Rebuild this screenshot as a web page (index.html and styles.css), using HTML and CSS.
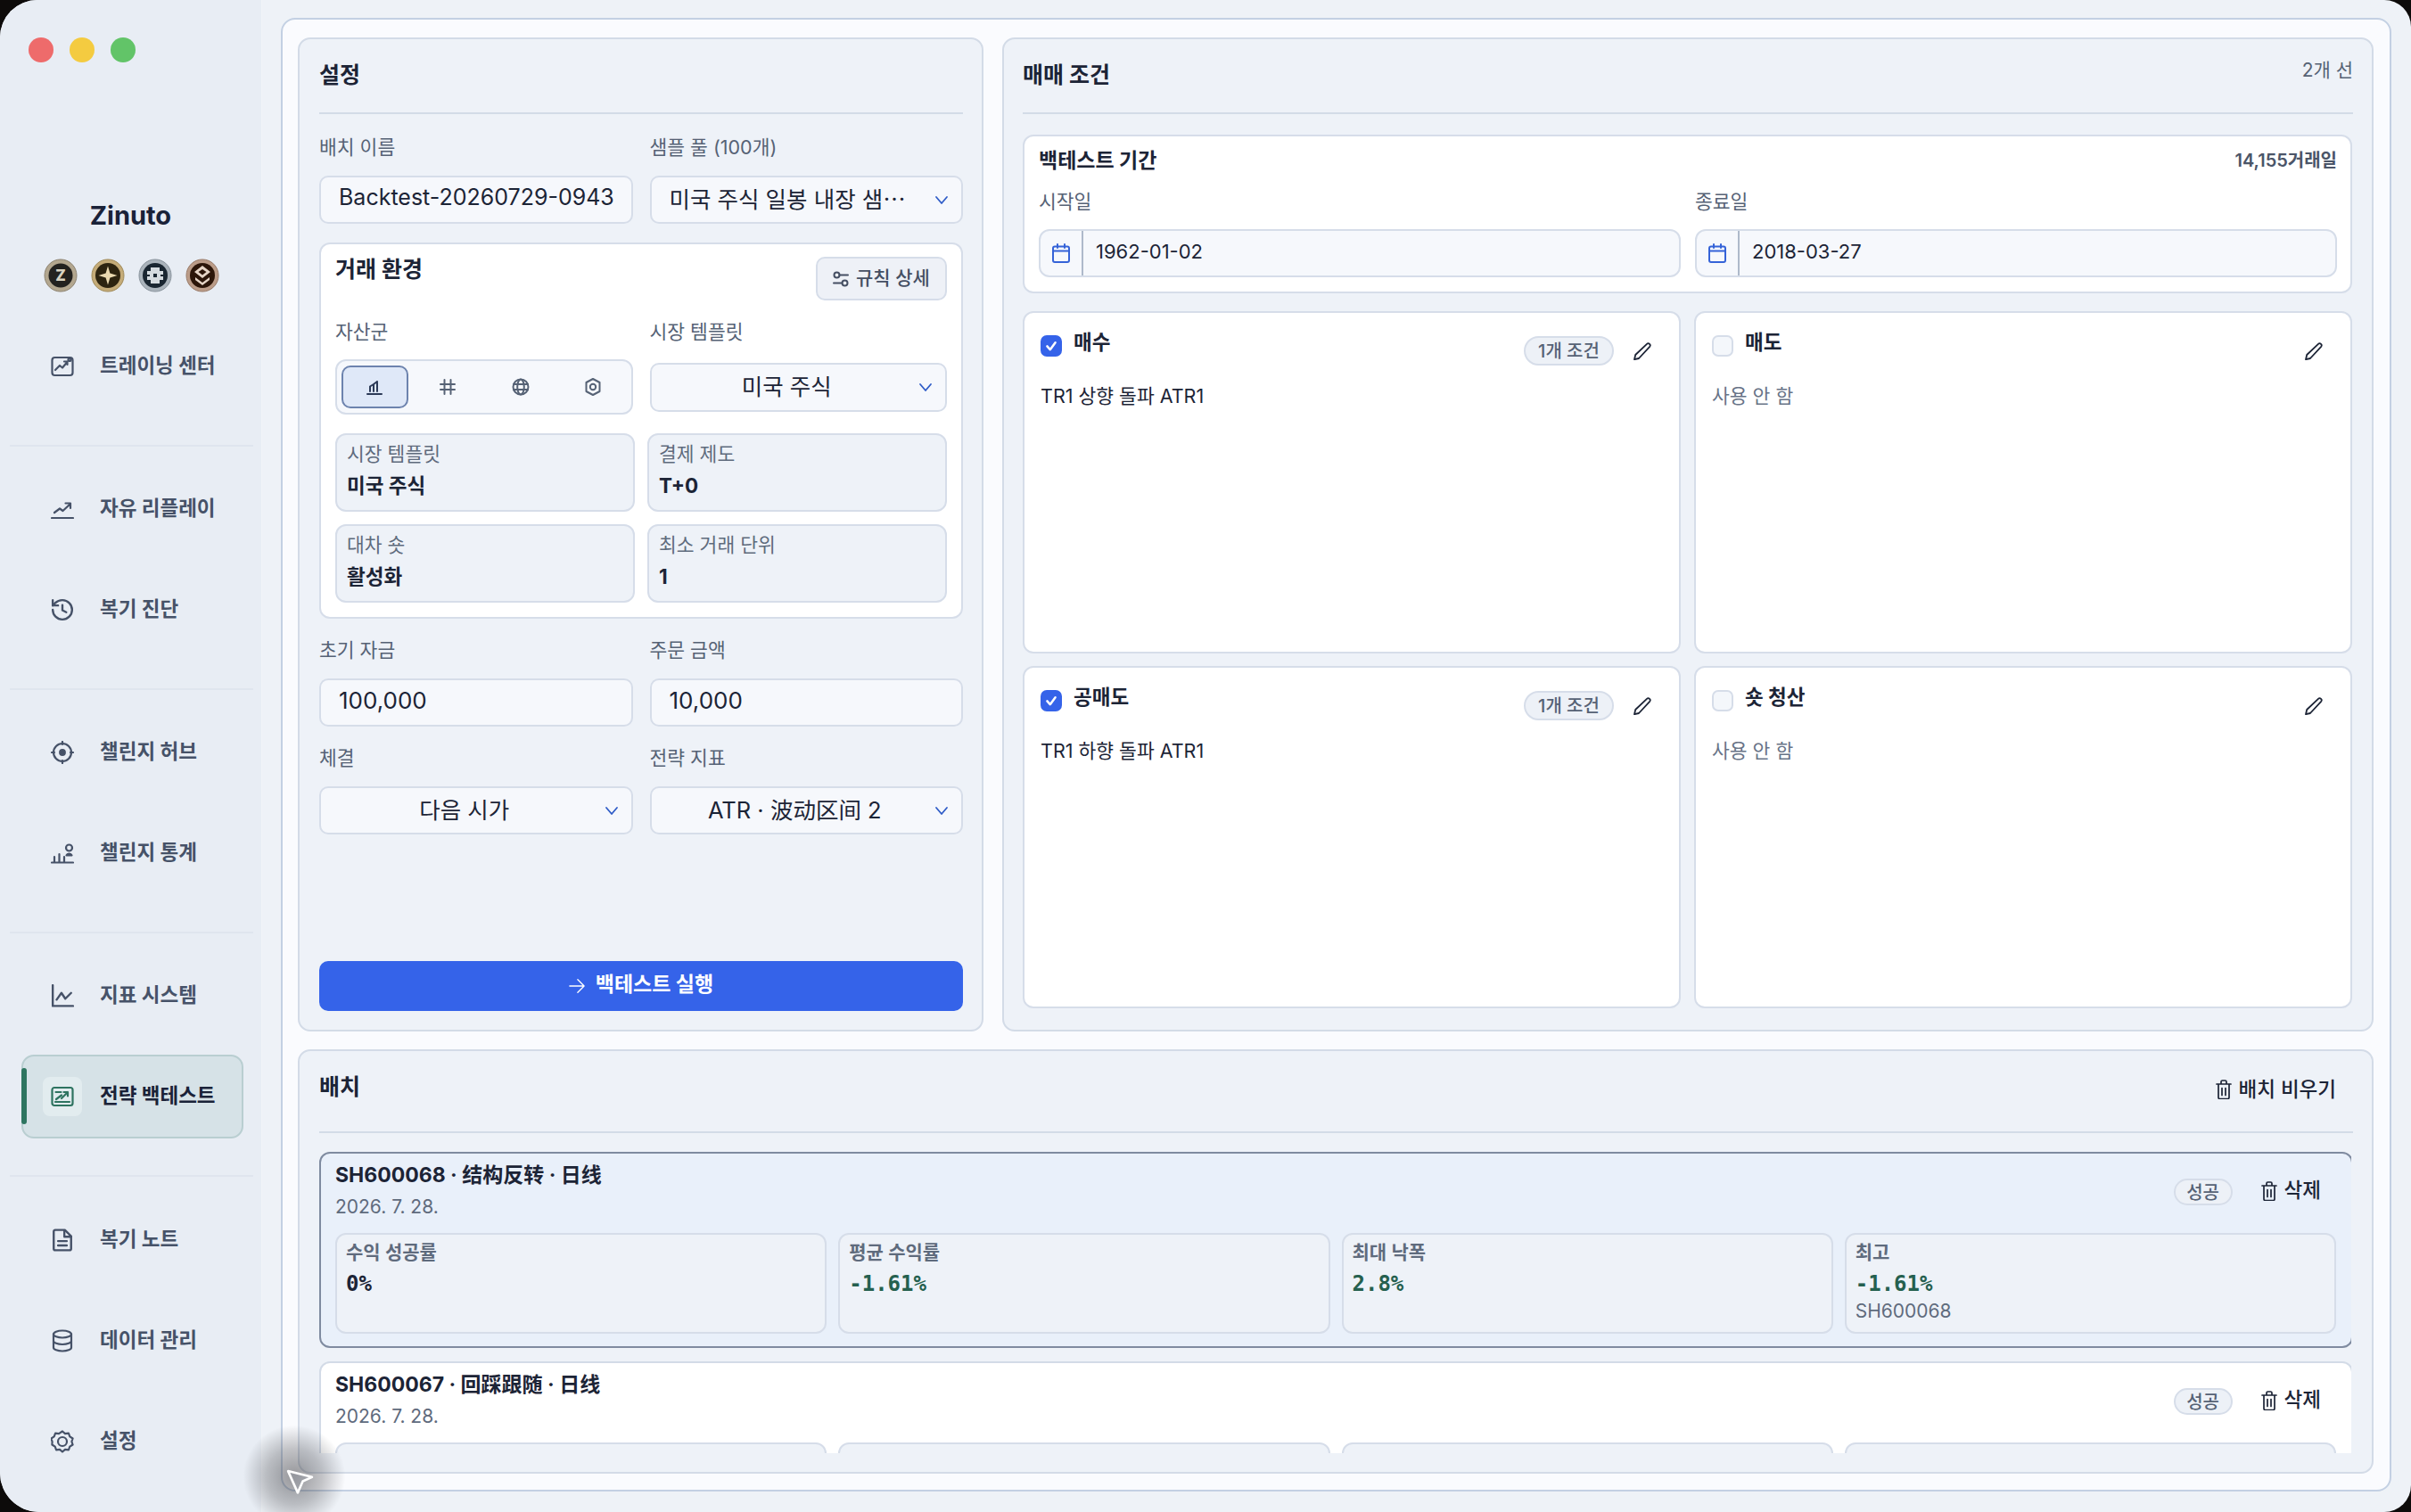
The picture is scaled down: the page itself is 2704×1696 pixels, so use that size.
FILE: index.html
```html
<!DOCTYPE html>
<html lang="ko">
<head>
    <meta charset="UTF-8">
    <title>Zinuto</title>
    <link rel="stylesheet" href="styles.css">
</head>
<body>
<div class="window">
    <aside class="sidebar">
        <div class="lights">
            <span class="light light-red"></span>
            <span class="light light-yellow"></span>
            <span class="light light-green"></span>
        </div>
        <div class="brand">Zinuto</div>
        <div class="badges">
            <svg class="badge" viewBox="0 0 38 38"><circle cx="19" cy="19" r="18" fill="#b3a78f" stroke="#8d8371"/><circle cx="19" cy="19" r="13.5" fill="#23221f"/><text x="19" y="25" text-anchor="middle" font-size="17" font-weight="800" fill="#d8d2c0" font-family="Inter">Z</text></svg>
            <svg class="badge" viewBox="0 0 38 38"><circle cx="19" cy="19" r="18" fill="#c4ab78" stroke="#a08a58"/><circle cx="19" cy="19" r="14" fill="#2d2410"/><path d="M19 8.5l2.4 8.1 8.1 2.4-8.1 2.4-2.4 8.1-2.4-8.1-8.1-2.4 8.1-2.4z" fill="#ead9b0"/></svg>
            <svg class="badge" viewBox="0 0 38 38"><circle cx="19" cy="19" r="18" fill="#aab3bb" stroke="#89939c"/><circle cx="19" cy="19" r="14" fill="#1a2631"/><path d="M14 10h10v4h4v4h-3v2h3v4h-4v4H14v-4h-4v-4h3v-2h-3v-4h4z" fill="#d5dbdf"/><rect x="17" y="17" width="4" height="4" fill="#1a2631"/></svg>
            <svg class="badge" viewBox="0 0 38 38"><circle cx="19" cy="19" r="18" fill="#bb9c88" stroke="#997c6a"/><circle cx="19" cy="19" r="14" fill="#2c1609"/><path d="M19 8l9 7-9 7-9-7zM19 12l-4.500 3 4.500 3.500 4.500-3.500z" fill="#e6d5c6" fill-rule="evenodd"/><path d="M11 21l8 6 8-6v3l-8 6-8-6z" fill="#e6d5c6"/></svg>
        </div>

        <div class="nav-group">
            <a class="nav-item">
                <span class="nav-icon"><svg class="icon" viewBox="0 0 26 24"><rect x="1.500" y="2" width="23" height="20" rx="3"/><path d="M5 16l5-5 3 2.500 5-6M15 6.500h3.500V10"/><circle cx="21" cy="4.500" r="1.500"/></svg></span>
                <span class="nav-label">트레이닝 센터</span>
            </a>
        </div>
        <div class="nav-group">
            <a class="nav-item">
                <span class="nav-icon"><svg class="icon" viewBox="0 0 26 24"><path d="M1 22h24M4 16l6-4.500 3.500 2.500L21 7M16.500 5.500H22V11"/></svg></span>
                <span class="nav-label">자유 리플레이</span>
            </a>
            <a class="nav-item gap">
                <span class="nav-icon"><svg class="icon" viewBox="0 0 24 24"><path d="M2 12a10 10 0 1 0 10-10 10.800 10.800 0 0 0-7.500 3L2 7.500"/><path d="M2 2v5.500h5.500M12 7v5.500l4 2"/></svg></span>
                <span class="nav-label">복기 진단</span>
            </a>
        </div>
        <div class="nav-group">
            <a class="nav-item">
                <span class="nav-icon"><svg class="icon" viewBox="0 0 26 26"><circle cx="13" cy="13" r="10"/><circle cx="13" cy="13" r="2.800" class="solid"/><path d="M13 1v3M13 22v3M1 13h3M22 13h3"/></svg></span>
                <span class="nav-label">챌린지 허브</span>
            </a>
            <a class="nav-item gap">
                <span class="nav-icon"><svg class="icon" viewBox="0 0 26 24"><path d="M1 22.500h24M4 22.500V16M9.500 22.500V13M15 22.500V16"/><circle cx="20.500" cy="6" r="3.500"/><path d="M17.500 14.500c1-2.500 5-2.500 6 0z"/></svg></span>
                <span class="nav-label">챌린지 통계</span>
            </a>
        </div>
        <div class="nav-group">
            <a class="nav-item">
                <span class="nav-icon"><svg class="icon" viewBox="0 0 24 24"><path d="M2 1v21.500h21M6 16l5-7 4 6 6-6"/></svg></span>
                <span class="nav-label">지표 시스템</span>
            </a>
            <a class="nav-item gap active">
                <span class="nav-bar"></span>
                <span class="nav-icon"><svg class="icon" viewBox="0 0 26 24"><rect x="1.500" y="2" width="23" height="20" rx="2.500"/><path d="M5 18h16M5.500 7h6M6 15l6-4.500M12 14l7-7M14.500 7H19v4.500"/></svg></span>
                <span class="nav-label">전략 백테스트</span>
            </a>
        </div>
        <div class="nav-group last">
            <a class="nav-item">
                <span class="nav-icon"><svg class="icon" viewBox="0 0 24 24"><path d="M14.500 1.500H4.500a1.500 1.500 0 0 0-1.500 1.500v18a1.500 1.500 0 0 0 1.500 1.500h15a1.500 1.500 0 0 0 1.500-1.500V8z"/><path d="M14 2v6.500h7M7.500 13h9M7.500 17.500h9"/></svg></span>
                <span class="nav-label">복기 노트</span>
            </a>
            <a class="nav-item gap">
                <span class="nav-icon"><svg class="icon" viewBox="0 0 24 26"><ellipse cx="12" cy="5.500" rx="10" ry="4"/><path d="M2 5.500v15c0 2.200 4.500 4 10 4s10-1.800 10-4v-15M2 13c0 2.200 4.500 4 10 4s10-1.800 10-4"/></svg></span>
                <span class="nav-label">데이터 관리</span>
            </a>
            <a class="nav-item gap">
                <span class="nav-icon"><svg class="icon" viewBox="0 0 26 26"><circle cx="13" cy="13" r="5"/><path d="M13 1.500l3 2.600 3.900-.5 1.400 3.700 3.300 2.200-1.200 3.500 1.200 3.500-3.300 2.200-1.400 3.700-3.900-.5-3 2.600-3-2.600-3.900.5-1.400-3.700-3.300-2.200L1.600 13 .4 9.500l3.300-2.200 1.400-3.700 3.900.5z"/></svg></span>
                <span class="nav-label">설정</span>
            </a>
        </div>
    </aside>

    <main class="main">
        <div class="frame">
            <div class="top-row">
                <section class="panel settings">
                    <header class="panel-head"><h2>설정</h2></header>
                    <div class="form-grid first">
                        <div class="field">
                            <label>배치 이름</label>
                            <div class="control"><span class="clip">Backtest-20260729-094325</span></div>
                        </div>
                        <div class="field">
                            <label>샘플 풀 (100개)</label>
                            <div class="control select"><span class="ellipsis">미국 주식 일봉 내장 샘플 풀</span>
                                <svg class="chevron" viewBox="0 0 16 16"><path d="M2 5l6 7 6-7"/></svg></div>
                        </div>
                    </div>

                    <div class="env-card">
                        <div class="env-head">
                            <h3>거래 환경</h3>
                            <button class="rule-btn">
                                <svg class="icon small" viewBox="0 0 18 18"><circle cx="4.500" cy="4.500" r="3"/><path d="M7.500 4.500H17M1 13.500h9.500"/><circle cx="13.500" cy="13.500" r="3"/></svg>
                                <span class="rule-text">규칙 상세</span>
                            </button>
                        </div>
                        <div class="form-grid env-fields">
                            <div class="field">
                                <label>자산군</label>
                                <div class="seg-wrap">
                                    <div class="segment">
                                        <span class="seg-btn on"><svg class="icon seg" viewBox="0 0 20 20"><path d="M2 18h16M5 15V9.500M9 15V7M13 15V4M9 7l-4 2.500M13 4L9 7"/></svg></span>
                                        <span class="seg-btn"><svg class="icon seg" viewBox="0 0 20 20"><path d="M6.500 2v16M13.500 2v16M2 7h16M2 13h16"/></svg></span>
                                        <span class="seg-btn"><svg class="icon seg" viewBox="0 0 20 20"><circle cx="10" cy="10" r="8.500"/><ellipse cx="10" cy="10" rx="3.800" ry="8.500"/><path d="M2 7h16M2 13h16"/></svg></span>
                                        <span class="seg-btn"><svg class="icon seg" viewBox="0 0 20 20"><path d="M10 1l7.500 4v10L10 19l-7.500-4V5z"/><circle cx="10" cy="10" r="3.200"/></svg></span>
                                    </div>
                                </div>
                            </div>
                            <div class="field">
                                <label>시장 템플릿</label>
                                <div class="seg-wrap">
                                    <div class="control select center env-select"><span class="grow">미국 주식</span>
                                        <svg class="chevron" viewBox="0 0 16 16"><path d="M2 5l6 7 6-7"/></svg></div>
                                </div>
                            </div>
                        </div>
                        <div class="info-grid">
                            <div class="info-card"><div class="info-label">시장 템플릿</div><div class="info-value">미국 주식</div></div>
                            <div class="info-card"><div class="info-label">결제 제도</div><div class="info-value">T+0</div></div>
                            <div class="info-card"><div class="info-label">대차 숏</div><div class="info-value">활성화</div></div>
                            <div class="info-card"><div class="info-label">최소 거래 단위</div><div class="info-value">1</div></div>
                        </div>
                    </div>

                    <div class="form-grid next">
                        <div class="field">
                            <label>초기 자금</label>
                            <div class="control big">100,000</div>
                        </div>
                        <div class="field">
                            <label>주문 금액</label>
                            <div class="control big">10,000</div>
                        </div>
                    </div>
                    <div class="form-grid next">
                        <div class="field">
                            <label>체결</label>
                            <div class="control select center"><span class="grow">다음 시가</span>
                                <svg class="chevron" viewBox="0 0 16 16"><path d="M2 5l6 7 6-7"/></svg></div>
                        </div>
                        <div class="field">
                            <label>전략 지표</label>
                            <div class="control select center"><span class="grow">ATR · 波动区间 2</span>
                                <svg class="chevron" viewBox="0 0 16 16"><path d="M2 5l6 7 6-7"/></svg></div>
                        </div>
                    </div>
                    <button class="run-btn">
                        <svg class="icon run" viewBox="0 0 20 20"><path d="M1 10h18M11 2l8 8-8 8"/></svg>
                        <span class="run-text">백테스트 실행</span>
                    </button>
                </section>

                <section class="panel rules">
                    <header class="panel-head">
                        <h2>매매 조건</h2>
                        <span class="head-note">2개 선</span>
                    </header>
                    <div class="period-card">
                        <div class="period-head">
                            <h3>백테스트 기간</h3>
                            <span class="period-count">14,155거래일</span>
                        </div>
                        <div class="date-grid">
                            <div class="field">
                                <label>시작일</label>
                                <div class="date-input">
                                    <span class="date-icon"><svg class="icon cal" viewBox="0 0 20 22"><rect x="1" y="3.500" width="18" height="17.500" rx="2"/><path d="M1 8.500h18M6 1v4M14 1v4"/></svg></span>
                                    <span class="date-text">1962-01-02</span>
                                </div>
                            </div>
                            <div class="field">
                                <label>종료일</label>
                                <div class="date-input">
                                    <span class="date-icon"><svg class="icon cal" viewBox="0 0 20 22"><rect x="1" y="3.500" width="18" height="17.500" rx="2"/><path d="M1 8.500h18M6 1v4M14 1v4"/></svg></span>
                                    <span class="date-text">2018-03-27</span>
                                </div>
                            </div>
                        </div>
                    </div>
                    <div class="cond-grid">
                        <div class="cond-card">
                            <div class="cond-head">
                                <span class="check on"><svg viewBox="0 0 24 24"><path d="M6.500 12.500l4 4.500 7-9.500"/></svg></span>
                                <span class="cond-title">매수</span>
                                <span class="pill cond-pill">1개 조건</span>
                                <svg class="icon pencil" viewBox="0 0 20 20"><path d="M15 1.800a2.200 2.200 0 0 1 3.200 3L6 18l-5 1.200L2.200 14z"/></svg>
                            </div>
                            <p class="cond-desc">TR1 상향 돌파 ATR1</p>
                        </div>
                        <div class="cond-card">
                            <div class="cond-head">
                                <span class="check"></span>
                                <span class="cond-title">매도</span>
                                <svg class="icon pencil" viewBox="0 0 20 20"><path d="M15 1.800a2.200 2.200 0 0 1 3.200 3L6 18l-5 1.200L2.200 14z"/></svg>
                            </div>
                            <p class="cond-desc off">사용 안 함</p>
                        </div>
                        <div class="cond-card">
                            <div class="cond-head">
                                <span class="check on"><svg viewBox="0 0 24 24"><path d="M6.500 12.500l4 4.500 7-9.500"/></svg></span>
                                <span class="cond-title">공매도</span>
                                <span class="pill cond-pill">1개 조건</span>
                                <svg class="icon pencil" viewBox="0 0 20 20"><path d="M15 1.800a2.200 2.200 0 0 1 3.200 3L6 18l-5 1.200L2.200 14z"/></svg>
                            </div>
                            <p class="cond-desc">TR1 하향 돌파 ATR1</p>
                        </div>
                        <div class="cond-card">
                            <div class="cond-head">
                                <span class="check"></span>
                                <span class="cond-title">숏 청산</span>
                                <svg class="icon pencil" viewBox="0 0 20 20"><path d="M15 1.800a2.200 2.200 0 0 1 3.200 3L6 18l-5 1.200L2.200 14z"/></svg>
                            </div>
                            <p class="cond-desc off">사용 안 함</p>
                        </div>
                    </div>
                </section>
            </div>

            <section class="panel batch">
                <header class="panel-head batch-head">
                    <h2>배치</h2>
                    <button class="text-btn clear">
                        <svg class="icon trash" viewBox="0 0 18 22"><path d="M1 5h16M6 5V2.500A1.500 1.500 0 0 1 7.500 1h3A1.500 1.500 0 0 1 12 2.500V5M3 5v15a1.500 1.500 0 0 0 1.500 1.500h9A1.500 1.500 0 0 0 15 20V5M7 9.500v8M11 9.500v8"/></svg>
                        배치 비우기
                    </button>
                </header>
                <div class="batch-list">
                    <article class="batch-card selected">
                        <div class="batch-top">
                            <div class="batch-info">
                                <div class="batch-title">SH600068 · 结构反转 · 日线</div>
                                <div class="batch-date">2026. 7. 28.</div>
                            </div>
                            <span class="pill status">성공</span>
                            <button class="text-btn del">
                                <svg class="icon trash" viewBox="0 0 18 22"><path d="M1 5h16M6 5V2.500A1.500 1.500 0 0 1 7.500 1h3A1.500 1.500 0 0 1 12 2.500V5M3 5v15a1.500 1.500 0 0 0 1.500 1.500h9A1.500 1.500 0 0 0 15 20V5M7 9.500v8M11 9.500v8"/></svg>
                                삭제
                            </button>
                        </div>
                        <div class="stat-grid">
                            <div class="stat"><div class="stat-label">수익 성공률</div><div class="stat-value">0%</div></div>
                            <div class="stat"><div class="stat-label">평균 수익률</div><div class="stat-value profit">-1.61%</div></div>
                            <div class="stat"><div class="stat-label">최대 낙폭</div><div class="stat-value profit">2.8%</div></div>
                            <div class="stat"><div class="stat-label">최고</div><div class="stat-value profit">-1.61%</div><div class="stat-sub">SH600068</div></div>
                        </div>
                    </article>
                    <article class="batch-card">
                        <div class="batch-top">
                            <div class="batch-info">
                                <div class="batch-title">SH600067 · 回踩跟随 · 日线</div>
                                <div class="batch-date">2026. 7. 28.</div>
                            </div>
                            <span class="pill status">성공</span>
                            <button class="text-btn del">
                                <svg class="icon trash" viewBox="0 0 18 22"><path d="M1 5h16M6 5V2.500A1.500 1.500 0 0 1 7.500 1h3A1.500 1.500 0 0 1 12 2.500V5M3 5v15a1.500 1.500 0 0 0 1.500 1.500h9A1.500 1.500 0 0 0 15 20V5M7 9.500v8M11 9.500v8"/></svg>
                                삭제
                            </button>
                        </div>
                        <div class="stat-grid">
                            <div class="stat"></div>
                            <div class="stat"></div>
                            <div class="stat"></div>
                            <div class="stat"></div>
                        </div>
                    </article>
                </div>
            </section>
        </div>
    </main>

    <div class="cursor-glow"></div>
    <svg class="cursor" viewBox="0 0 30 28"><path d="M2 2l26 6.500-10 4.500-5.500 12.500z"/></svg>
</div>
</body>
</html>
```

FILE: styles.css
```css
* {
    box-sizing: border-box;
}
html, body {
    margin: 0;
    background: #0d0b0a;
}
body {
    width: 2704px;
    height: 1696px;
    overflow: hidden;
    font-family: Inter, "Noto Sans CJK KR", sans-serif;
    color: #1c2436;
}
h2, h3, p {
    margin: 0;
}
button {
    font-family: inherit;
    border: none;
    background: none;
    padding: 0;
    color: inherit;
}
.window {
    position: relative;
    display: flex;
    width: 2704px;
    height: 1696px;
    overflow: hidden;
    background: #eef2f7;
    border-radius: 42px 30px 30px 44px;
}
.icon {
    fill: none;
    stroke: currentColor;
    stroke-width: 2;
    stroke-linecap: round;
    stroke-linejoin: round;
    flex: none;
}
.icon .solid {
    fill: currentColor;
}

/* sidebar */
.sidebar {
    width: 294px;
    flex: none;
    padding-top: 42px;
    background: #e8edf4;
    border-right: 1px solid #f1f4f8;
}
.lights {
    display: flex;
    gap: 18px;
    margin-left: 32px;
}
.light {
    width: 28px;
    height: 28px;
    border-radius: 50%;
}
.light-red { background: #ee6b6b; }
.light-yellow { background: #f4cb40; }
.light-green { background: #62c468; }
.brand {
    margin-top: 152px;
    font-size: 29px;
    line-height: 40px;
    font-weight: 700;
    text-align: center;
    color: #1a2238;
}
.badges {
    display: flex;
    justify-content: center;
    gap: 15px;
    margin-top: 28px;
    padding-left: 1px;
}
.badge {
    width: 38px;
    height: 38px;
}
.nav-group {
    margin: 0 9px 0 11px;
    padding: 23px 0 41px;
    border-bottom: 2px solid #dfe5ee;
}
.badges + .nav-group {
    margin-top: 13px;
}
.nav-group.last {
    padding-top: 24px;
    border-bottom: none;
}
.nav-item {
    position: relative;
    display: flex;
    align-items: center;
    gap: 20px;
    width: 249px;
    height: 94px;
    margin-left: 13px;
    padding-left: 22px;
    border: 2px solid transparent;
    border-radius: 14px;
    color: #465268;
}
.nav-item.gap {
    margin-top: 19px;
}
.nav-icon {
    display: flex;
    align-items: center;
    justify-content: center;
    width: 44px;
    height: 44px;
    border-radius: 8px;
}
.nav-icon .icon {
    width: 26px;
    height: 26px;
    stroke-width: 2.200;
}
.nav-label {
    margin-bottom: 6px;
    font-size: 22.500px;
    font-weight: 700;
    white-space: nowrap;
}
.nav-item.active {
    background: #d6e2e7;
    border-color: #b9ced1;
    color: #1a2238;
}
.nav-item.active .nav-icon {
    background: #e2ecef;
    color: #2e7360;
}
.nav-bar {
    position: absolute;
    left: -2px;
    top: 13px;
    width: 6px;
    height: 63px;
    border-radius: 3px;
    background: #2e7560;
}

/* main */
.main {
    flex: 1;
    padding: 20px 22px 23px 21px;
    min-width: 0;
}
.frame {
    display: flex;
    flex-direction: column;
    gap: 20px;
    height: 100%;
    padding: 20px 18px 18px 17px;
    background: #fafbfe;
    border: 2px solid #c3d0e3;
    border-radius: 16px;
}
.top-row {
    display: grid;
    grid-template-columns: 769px minmax(0, 1fr);
    gap: 21px;
    height: 1115px;
}
.panel {
    display: flex;
    flex-direction: column;
    padding: 0 21px 21px 22px;
    background: #eef2f8;
    border: 2px solid #d3dbe7;
    border-radius: 14px;
    min-width: 0;
}
.rules {
    padding-left: 21px;
}
.panel-head {
    display: flex;
    justify-content: space-between;
    align-items: center;
    flex: none;
    height: 84px;
    padding-bottom: 7px;
    border-bottom: 2px solid #d3dbe7;
}
h2 {
    font-size: 25px;
    font-weight: 700;
}
h3 {
    font-size: 23px;
    font-weight: 700;
}
.head-note {
    align-self: flex-start;
    margin-top: 18px;
    font-size: 21px;
    color: #566275;
}
.form-grid {
    display: grid;
    grid-template-columns: minmax(0, 1fr) minmax(0, 1fr);
    gap: 19px;
}
.form-grid.first {
    padding-top: 22px;
}
.form-grid.next {
    margin-top: 20px;
}
.field label {
    display: block;
    height: 30px;
    margin-bottom: 17px;
    font-size: 21.500px;
    line-height: 30px;
    color: #566275;
}
.control {
    display: flex;
    align-items: center;
    height: 54px;
    padding: 0 20px 6px;
    background: #f6f8fc;
    border: 2px solid #d6dde9;
    border-radius: 10px;
    font-size: 25.500px;
    color: #1c2436;
    white-space: nowrap;
}
.control.big {
    font-size: 26px;
}
.clip {
    overflow: hidden;
    font-size: 25px;
}
.select {
    padding-right: 14px;
}
.ellipsis {
    flex: 1;
    min-width: 0;
    overflow: hidden;
    text-overflow: ellipsis;
    margin-right: 26px;
    font-family: "Noto Sans CJK KR", sans-serif;
}
.grow {
    flex: 1;
    text-align: center;
    padding-right: 16px;
}
.chevron {
    width: 16px;
    height: 16px;
    flex: none;
    margin-top: 6px;
    fill: none;
    stroke: #2f5cc7;
    stroke-width: 1.800;
    stroke-linecap: round;
    stroke-linejoin: round;
}

/* trade environment */
.env-card {
    margin-top: 21px;
    height: 422px;
    padding: 14px 16px 0;
    background: #fff;
    border: 2px solid #d6dde9;
    border-radius: 12px;
}
.env-head {
    display: flex;
    justify-content: space-between;
    align-items: flex-start;
}
.env-head h3 {
    margin-top: 1px;
    font-size: 25px;
    line-height: 26px;
}
.rule-btn {
    display: flex;
    align-items: center;
    gap: 8px;
    width: 147px;
    height: 49px;
    padding-left: 17px;
    background: #eef1f7;
    border: 2px solid #d6dde9;
    border-radius: 10px;
    font-size: 21px;
    font-weight: 500;
    color: #454f63;
}
.rule-text {
    margin-bottom: 5px;
}
.icon.small {
    width: 18px;
    height: 18px;
}
.env-fields {
    margin-top: 20px;
}
.env-fields label {
    margin-bottom: 16px;
}
.seg-wrap {
    display: flex;
    align-items: center;
    height: 62px;
}
.env-select {
    flex: 1;
    height: 55px;
}
.segment {
    display: grid;
    grid-template-columns: repeat(4, 1fr);
    gap: 7px;
    width: 100%;
    height: 62px;
    padding: 5px;
    background: #f6f8fc;
    border: 2px solid #d6dde9;
    border-radius: 12px;
}
.seg-btn {
    display: flex;
    align-items: center;
    justify-content: center;
    border: 2px solid transparent;
    border-radius: 10px;
    color: #566275;
}
.seg-btn.on {
    background: #dfe8f8;
    border-color: #6d83ae;
    color: #2c3a58;
}
.icon.seg {
    width: 20px;
    height: 20px;
}
.info-grid {
    display: grid;
    grid-template-columns: minmax(0, 1fr) minmax(0, 1fr);
    grid-auto-rows: 88px;
    gap: 14px;
    margin-top: 21px;
}
.info-card {
    padding: 6px 11px 0;
    background: #eef2f8;
    border: 2px solid #d6dde9;
    border-radius: 12px;
}
.info-label {
    font-size: 21.500px;
    line-height: 30px;
    color: #5f6b7d;
}
.info-value {
    margin-top: 4px;
    font-size: 22.500px;
    line-height: 34px;
    font-weight: 700;
}
.run-btn {
    display: flex;
    align-items: center;
    justify-content: center;
    gap: 12px;
    flex: none;
    height: 56px;
    margin-top: auto;
    background: #3563e9;
    border-radius: 10px;
    font-size: 23px;
    font-weight: 700;
    color: #fff;
}
.run-text {
    margin-bottom: 8px;
}
.icon.run {
    width: 18px;
    height: 18px;
    stroke-width: 1.500;
}

/* trade conditions */
.period-card {
    flex: none;
    height: 178px;
    margin: 23px 1px 0 0;
    padding: 11px 15px 0 16px;
    background: #fff;
    border: 2px solid #d6dde9;
    border-radius: 12px;
}
.period-head {
    display: flex;
    justify-content: space-between;
    align-items: center;
    height: 28px;
    margin-bottom: 19px;
}
.period-count {
    font-size: 20px;
    font-weight: 600;
    color: #4b5568;
}
.date-grid {
    display: grid;
    grid-template-columns: minmax(0, 1fr) minmax(0, 1fr);
    gap: 16px;
}
.date-grid label {
    margin-bottom: 16px;
}
.date-input {
    display: flex;
    align-items: stretch;
    height: 54px;
    background: #f6f8fc;
    border: 2px solid #d6dde9;
    border-radius: 12px;
}
.date-icon {
    display: flex;
    align-items: center;
    justify-content: center;
    width: 48px;
    border-right: 2px solid #aeb9ca;
    color: #3563d8;
}
.icon.cal {
    width: 20px;
    height: 22px;
}
.date-text {
    align-self: center;
    margin-left: 14px;
    font-size: 22px;
    margin-bottom: 4px;
}
.cond-grid {
    display: grid;
    grid-template-columns: minmax(0, 1fr) minmax(0, 1fr);
    grid-template-rows: 1fr 1fr;
    gap: 14px 15px;
    flex: 1;
    margin: 20px 1px 3px 0;
    min-height: 0;
}
.cond-card {
    padding: 25px 31px 0 18px;
    background: #fff;
    border: 2px solid #d6dde9;
    border-radius: 12px;
}
.cond-head {
    display: flex;
    align-items: flex-start;
    height: 34px;
}
.check {
    width: 24px;
    height: 24px;
    flex: none;
    background: #f4f7fb;
    border: 2px solid #d6dde9;
    border-radius: 7px;
}
.check.on {
    background: #3563e9;
    border-color: #3563e9;
}
.check svg {
    display: block;
    width: 20px;
    height: 20px;
    fill: none;
    stroke: #fff;
    stroke-width: 3;
    stroke-linecap: round;
    stroke-linejoin: round;
}
.cond-title {
    margin: -8px 0 0 13px;
    font-size: 22.500px;
    line-height: 32px;
    font-weight: 700;
}
.pill {
    display: flex;
    align-items: center;
    justify-content: center;
    background: #edf1f7;
    border: 2px solid #d6dde9;
    border-radius: 17px;
    color: #566275;
}
.cond-pill {
    width: 101px;
    height: 33px;
    margin: 1px 0 0 auto;
    font-size: 20px;
    font-weight: 500;
    padding-bottom: 3px;
}
.pencil {
    width: 20px;
    height: 20px;
    margin: 8px 0 0 22px;
    stroke-width: 1.800;
}
.cond-title + .pencil {
    margin-left: auto;
}
.cond-desc {
    margin-top: 19px;
    font-size: 21.500px;
    line-height: 30px;
}
.cond-desc.off {
    color: #687487;
}

/* batch */
.batch {
    flex: 1;
    min-height: 0;
}
.batch-head {
    height: 92px;
    padding-bottom: 15px;
}
.text-btn {
    display: flex;
    align-items: center;
    gap: 8px;
    font-size: 22.500px;
    font-weight: 500;
    color: #1c2436;
}
.clear {
    margin: 6px 19px 0 0;
}
.icon.trash {
    width: 18px;
    height: 22px;
    margin-top: 5px;
    stroke-width: 1.700;
}
/* the list clips the right border of its cards, as the scroll area does */
.batch-list {
    flex: 1;
    min-height: 0;
    margin: 21px 2px 0 0;
    overflow: hidden;
}
.batch-card {
    height: 220px;
    margin: 0 -2px 15px 0;
    padding: 9px 17px 0 16px;
    background: #fff;
    border: 2px solid #d3dbe7;
    border-radius: 12px;
}
.batch-card.selected {
    background: #e9f0fa;
    border-color: #7f8ba0;
}
.batch-top {
    display: flex;
    align-items: flex-start;
}
.batch-info {
    flex: 1;
}
.batch-title {
    font-size: 23px;
    line-height: 30px;
    font-weight: 700;
}
.batch-date {
    margin-top: 6px;
    font-size: 21px;
    line-height: 30px;
    color: #5f6b7d;
}
.status {
    width: 66px;
    height: 30px;
    margin-top: 19px;
    font-size: 20px;
    font-weight: 500;
    padding-bottom: 2px;
}
.del {
    margin: 14px 17px 0 32px;
}
.stat-grid {
    display: grid;
    grid-template-columns: repeat(4, minmax(0, 1fr));
    gap: 13px;
    margin-top: 14px;
}
.stat {
    height: 113px;
    padding: 6px 10px 0;
    background: #eef2f8;
    border: 2px solid #d6dde9;
    border-radius: 12px;
}
.stat-label {
    font-size: 21px;
    line-height: 28px;
    font-weight: 600;
    color: #5f6b7d;
}
.stat-value {
    margin-top: 4px;
    font-family: "DejaVu Sans Mono", monospace;
    font-size: 24px;
    line-height: 34px;
    font-weight: 700;
}
.stat-value.profit {
    color: #25604f;
}
.stat-sub {
    margin-top: 1px;
    font-size: 21px;
    line-height: 26px;
    color: #5f6b7d;
}

/* pointer */
.cursor-glow {
    position: absolute;
    left: 272px;
    top: 1598px;
    width: 116px;
    height: 116px;
    border-radius: 50%;
    background: radial-gradient(circle, rgba(50, 50, 55, 0.5) 0%, rgba(50, 50, 55, 0.28) 38%, rgba(50, 50, 55, 0) 70%);
}
.cursor {
    position: absolute;
    left: 321px;
    top: 1648px;
    width: 31px;
    height: 29px;
    fill: rgba(150, 155, 165, 0.4);
    stroke: #fff;
    stroke-width: 2.500;
    stroke-linejoin: round;
}
```
